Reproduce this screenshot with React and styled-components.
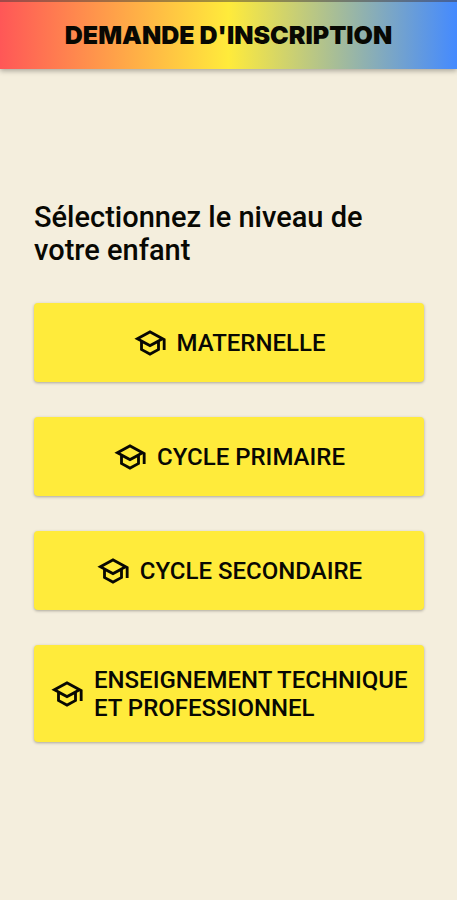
import React from "react";
import styled, { createGlobalStyle } from "styled-components";

const GlobalStyle = createGlobalStyle`
  * { box-sizing: border-box; }
  body { margin: 0; background: #f4eedd; color: #080803; font-family: Roboto, sans-serif; }
`;

const Screen = styled.div`
  min-height: 100vh;
  display: flex;
  flex-direction: column;
`;

const Header = styled.header`
  height: 69px;
  display: flex;
  align-items: center;
  justify-content: center;
  padding-bottom: 2px;
  border-top: 2px solid rgba(70, 60, 60, 0.5);
  background: linear-gradient(to right, #ff5757, #ffeb3b 50%, #448aff) border-box;
  box-shadow: 0 2px 5px rgba(0, 0, 0, 0.3);
`;

const Title = styled.h1`
  margin: 0;
  font: 900 25px/28px Inter, sans-serif;
`;

const Content = styled.main`
  flex: 1;
  display: flex;
  flex-direction: column;
  justify-content: center;
  padding: 0 33px 27px 34px;
`;

const Question = styled.h2`
  margin: 0 0 36px;
  font-size: 29px;
  line-height: 33px;
  font-weight: 500;
`;

const Levels = styled.div`
  display: flex;
  flex-direction: column;
  gap: 35px;
`;

const LevelButton = styled.button`
  min-height: 79px;
  display: flex;
  align-items: center;
  justify-content: center;
  gap: 10px;
  padding: 21px 16px 20px;
  border: 0;
  border-radius: 4px;
  background: #ffeb3b;
  color: inherit;
  font: 500 24px/28px Roboto, sans-serif;
  text-align: left;
  box-shadow: 0 1px 3px rgba(0, 0, 0, 0.3);
  cursor: pointer;
`;

const CapIcon = styled.svg`
  width: 34px;
  height: 34px;
  flex: none;
`;

const levels = [
  "MATERNELLE",
  "CYCLE PRIMAIRE",
  "CYCLE SECONDAIRE",
  "ENSEIGNEMENT TECHNIQUE ET PROFESSIONNEL",
];

export default function App() {
  return (
    <Screen>
      <GlobalStyle />
      <Header>
        <Title>DEMANDE D'INSCRIPTION</Title>
      </Header>
      <Content>
        <Question>Sélectionnez le niveau de votre enfant</Question>
        <Levels>
          {levels.map((level) => (
            <LevelButton key={level} type="button">
              <CapIcon viewBox="0 0 24 24" fill="currentColor" aria-hidden="true">
                <path d="M12 3 1 9l4 2.18v6L12 21l7-3.82v-6l2-1.09V17h2V9L12 3zm6.82 6L12 12.72 5.18 9 12 5.28 18.82 9zM17 15.99l-5 2.73-5-2.73v-3.72L12 15l5-2.73v3.72z" />
              </CapIcon>
              <span>{level}</span>
            </LevelButton>
          ))}
        </Levels>
      </Content>
    </Screen>
  );
}
